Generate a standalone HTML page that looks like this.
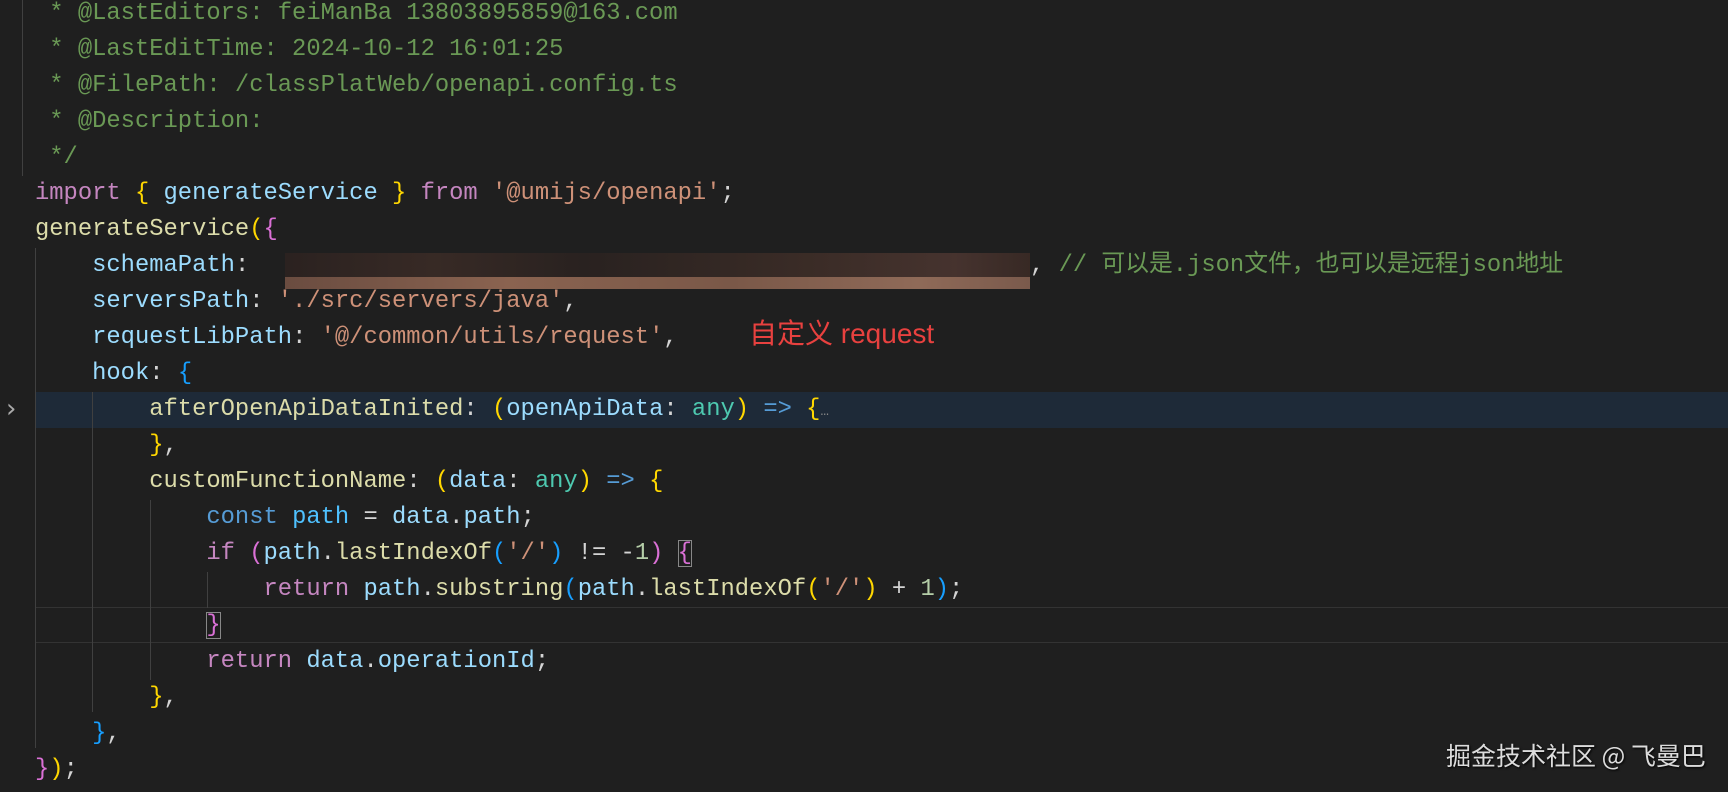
<!DOCTYPE html>
<html><head><meta charset="utf-8">
<style>
html,body{margin:0;padding:0;background:#1f1f1f;width:1728px;height:792px;overflow:hidden;position:relative}
.l{position:absolute;left:35px;height:36px;line-height:36px;font-family:"Liberation Mono","Noto Sans CJK SC",monospace;font-size:23.8px;white-space:pre;color:#d4d4d4}
.c{color:#6a9955}.k{color:#c586c0}.v{color:#9cdcfe}.f{color:#dcdcaa}.s{color:#ce9178}.g{color:#ffd700}.p{color:#da70d6}.b{color:#179fff}.t{color:#4ec9b0}.o{color:#569cd6}.n{color:#b5cea8}.cv{color:#4fc1ff}
.guide{position:absolute;width:1px;background:#404040}
.box{outline:1px solid #888;outline-offset:-1px}
</style></head><body>
<div style="position:absolute;left:35px;top:392px;width:1693px;height:36px;background:#1e2a38"></div>
<div style="position:absolute;left:35px;top:607px;width:1693px;height:34px;border:1px solid #333;border-left:none;border-right:none"></div>
<div style="position:absolute;left:6px;top:394px;color:#aaa;font:26px 'DejaVu Sans',sans-serif">&#x203A;</div>
<div class="guide" style="left:22px;top:0;height:176px"></div>
<div class="guide" style="left:35px;top:248px;height:500px"></div>
<div class="guide" style="left:92px;top:392px;height:320px"></div>
<div class="guide" style="left:150px;top:500px;height:180px"></div>
<div class="guide" style="left:207px;top:572px;height:36px"></div>

<div class="l c" style="top:-4px"> * @LastEditors: feiManBa 13803895859@163.com</div>
<div class="l c" style="top:32px"> * @LastEditTime: 2024-10-12 16:01:25</div>
<div class="l c" style="top:68px"> * @FilePath: /classPlatWeb/openapi.config.ts</div>
<div class="l c" style="top:104px"> * @Description:</div>
<div class="l c" style="top:140px"> */</div>
<div class="l" style="top:176px"><span class="k">import</span> <span class="g">{</span> <span class="v">generateService</span> <span class="g">}</span> <span class="k">from</span> <span class="s">'@umijs/openapi'</span>;</div>
<div class="l" style="top:212px"><span class="f">generateService</span><span class="g">(</span><span class="p">{</span></div>
<div class="l" style="top:248px">    <span class="v">schemaPath</span>: </div>
<div style="position:absolute;left:285px;top:253px;width:745px;height:25px;background:linear-gradient(90deg,#2c2220,#3a2b26 20%,#2a2220 40%,#3d2d27 70%,#4a3530 90%,#3a2a25);opacity:.9"></div>
<div style="position:absolute;left:285px;top:277px;width:745px;height:12px;background:linear-gradient(90deg,#6a4c40,#8a6350 30%,#7a5848 60%,#8f6a58 85%,#7a5a4c)"></div>
<div class="l" style="top:248px;left:1030px">, <span class="c">// 可以是.json文件，也可以是远程json地址</span></div>
<div class="l" style="top:284px">    <span class="v">serversPath</span>: <span class="s">'./src/servers/java'</span>,</div>
<div class="l" style="top:320px">    <span class="v">requestLibPath</span>: <span class="s">'@/common/utils/request'</span>,</div>
<div style="position:absolute;left:749px;top:316px;font:28px 'Liberation Sans','Noto Sans CJK SC',sans-serif;color:#e8413f;line-height:36px">自定义 request</div>
<div class="l" style="top:356px">    <span class="v">hook</span>: <span class="b">{</span></div>
<div class="l" style="top:392px">        <span class="f">afterOpenApiDataInited</span>: <span class="g">(</span><span class="v">openApiData</span>: <span class="t">any</span><span class="g">)</span> <span class="o">=&gt;</span> <span class="g">{</span><span style="color:#888;font-size:14px">…</span></div>
<div class="l" style="top:428px">        <span class="g">}</span>,</div>
<div class="l" style="top:464px">        <span class="f">customFunctionName</span>: <span class="g">(</span><span class="v">data</span>: <span class="t">any</span><span class="g">)</span> <span class="o">=&gt;</span> <span class="g">{</span></div>
<div class="l" style="top:500px">            <span class="o">const</span> <span class="cv">path</span> = <span class="v">data</span>.<span class="v">path</span>;</div>
<div class="l" style="top:536px">            <span class="k">if</span> <span class="p">(</span><span class="v">path</span>.<span class="f">lastIndexOf</span><span class="b">(</span><span class="s">'/'</span><span class="b">)</span> != -<span class="n">1</span><span class="p">)</span> <span class="p box">{</span></div>
<div class="l" style="top:572px">                <span class="k">return</span> <span class="v">path</span>.<span class="f">substring</span><span class="b">(</span><span class="v">path</span>.<span class="f">lastIndexOf</span><span class="g">(</span><span class="s">'/'</span><span class="g">)</span> + <span class="n">1</span><span class="b">)</span>;</div>
<div class="l" style="top:608px">            <span class="p box">}</span></div>
<div class="l" style="top:644px">            <span class="k">return</span> <span class="v">data</span>.<span class="v">operationId</span>;</div>
<div class="l" style="top:680px">        <span class="g">}</span>,</div>
<div class="l" style="top:716px">    <span class="b">}</span>,</div>
<div class="l" style="top:752px"><span class="p">}</span><span class="g">)</span>;</div>
<div style="position:absolute;left:1446px;top:738px;font:25px 'Noto Sans CJK SC','Liberation Sans',sans-serif;color:#dcdcdc;line-height:34px;text-shadow:1px 1px 2px #000">掘金技术社区 @ 飞曼巴</div>
</body></html>
